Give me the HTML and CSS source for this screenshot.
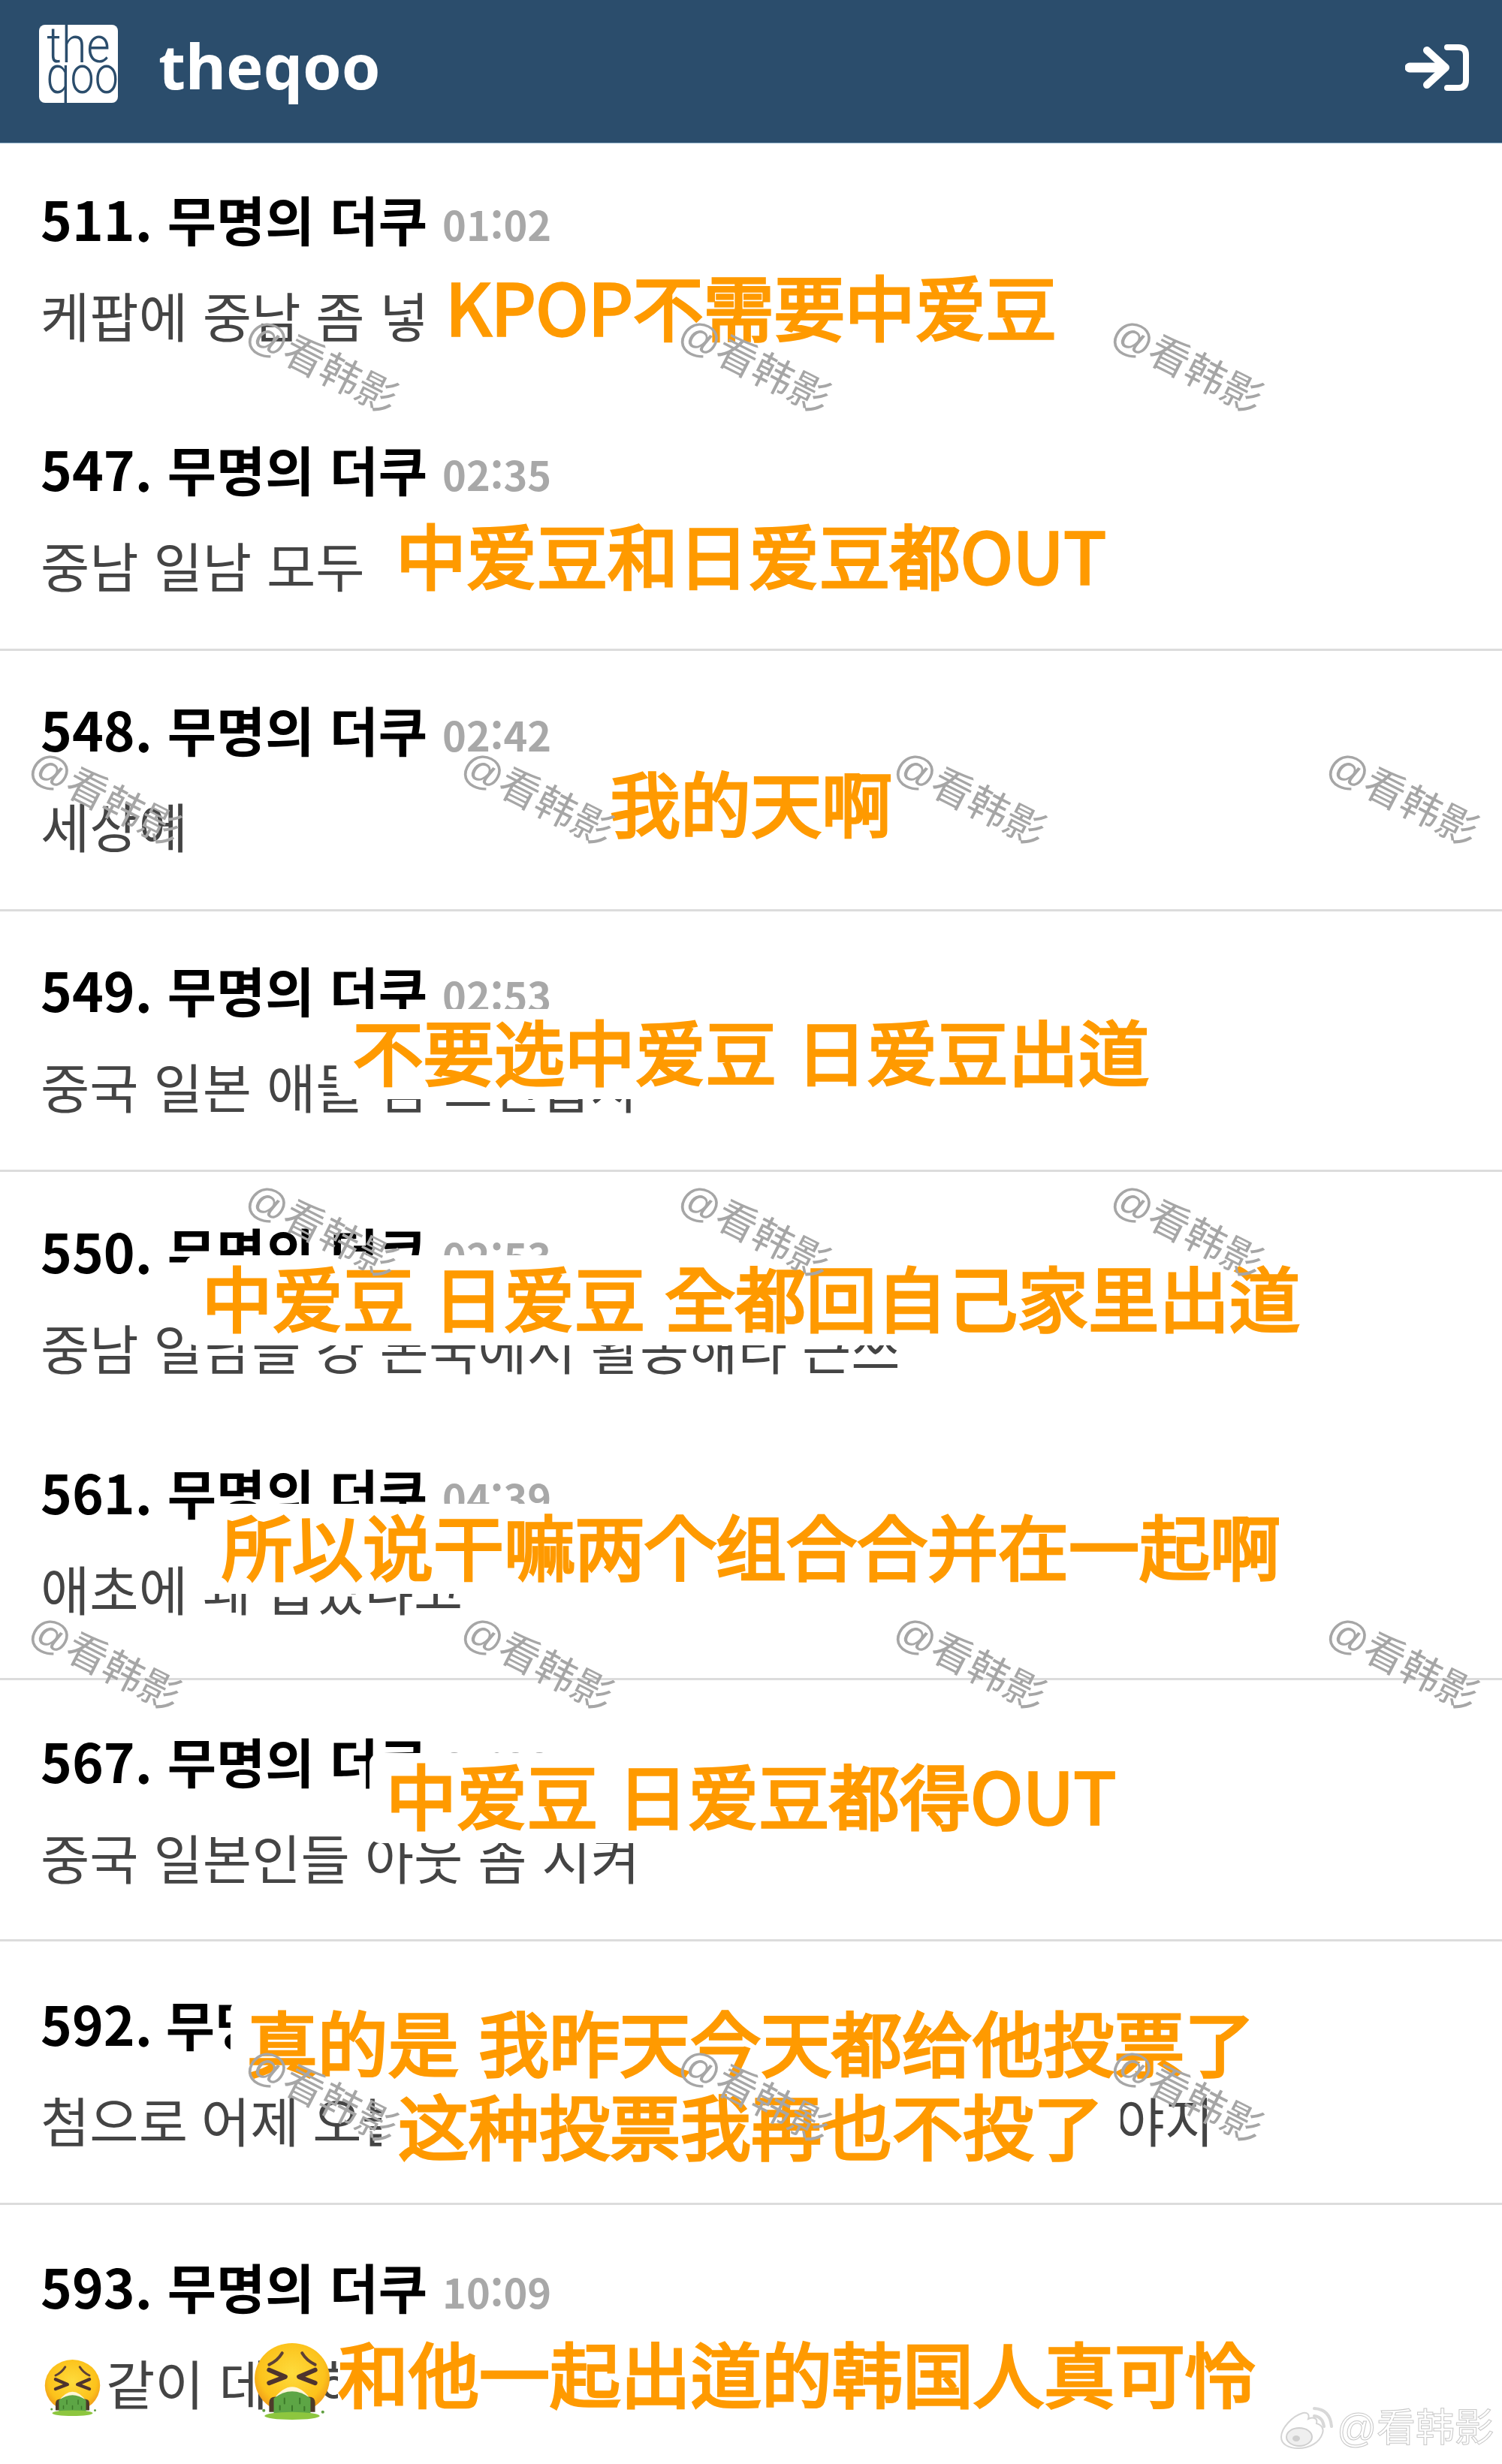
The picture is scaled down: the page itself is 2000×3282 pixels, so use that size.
FILE: index.html
```html
<!DOCTYPE html>
<html lang="ko">
<head>
  <meta charset="UTF-8" />
  <meta name="viewport" content="width=device-width, initial-scale=1" />
  <title>theqoo</title>
  <link rel="stylesheet" href="styles.css">
</head>
<body>

<svg class="defs" width="0" height="0">
  <defs>
    <radialGradient id="faceFill" cx="50%" cy="42%" r="58%">
      <stop offset="0" stop-color="#fedb3c" />
      <stop offset="0.75" stop-color="#fcc21b" />
      <stop offset="1" stop-color="#f19a1a" />
    </radialGradient>
    <symbol id="vomit" viewBox="0 0 100 100">
      <ellipse cx="50" cy="46" rx="49" ry="46" fill="url(#faceFill)" />
      <path d="M20 28 Q31 23 37 13 M80 28 Q69 23 63 13" fill="none" stroke="#5d4037" stroke-width="4" stroke-linecap="round" />
      <path d="M20 35 L41 44 L20 52 M80 35 L59 44 L80 52" fill="none" stroke="#4e342e" stroke-width="6" stroke-linecap="round" stroke-linejoin="round" />
      <path d="M25 74 Q50 40 75 74 Z" fill="#fff6d8" />
      <path d="M20 90 V78 Q20 70 28 70 H72 Q80 70 80 78 V90 Z" fill="#4e3b2a" />
      <path d="M26 92 V72 Q38 63 50 63 Q62 63 74 72 V92 Z" fill="#5da545" />
      <path d="M40 72 v7 M50 82 v6 M60 72 v7 M34 82 v5 M66 83 v5" stroke="#3c7a2a" stroke-width="2" stroke-linecap="round" />
      <ellipse cx="50" cy="95" rx="36" ry="5" fill="#8dc63f" />
      <circle cx="13" cy="88" r="2" fill="#5f9e3f" />
      <circle cx="90" cy="90" r="2" fill="#5f9e3f" />
    </symbol>
  </defs>
</svg>

<header class="topbar">
  <div class="logo">
    <span class="logo-the">the</span>
    <span class="logo-qoo">qoo</span>
  </div>
  <div class="site-name">theqoo</div>
  <svg class="login-icon" viewBox="0 0 85 64" width="85" height="64">
    <path d="M6 32 H50" fill="none" stroke="#fff" stroke-width="13" stroke-linecap="round" />
    <path d="M29 9 L54 32 L29 55" fill="none" stroke="#fff" stroke-width="10" stroke-linecap="round" stroke-linejoin="round" />
    <path d="M56 5 H71 Q81 5 81 15 V49 Q81 59 71 59 H56" fill="none" stroke="#fff" stroke-width="8" stroke-linecap="round" />
  </svg>
</header>

<main class="comments">
  <article class="comment c511">
    <div class="who">511. 무명의 더쿠 <span class="time">01:02</span></div>
    <p class="msg">케팝에 중남 좀 넣</p>
  </article>
  <article class="comment c547">
    <div class="who">547. 무명의 더쿠 <span class="time">02:35</span></div>
    <p class="msg">중남 일남 모두</p>
  </article>
  <article class="comment c548">
    <div class="who">548. 무명의 더쿠 <span class="time">02:42</span></div>
    <p class="msg">세상에</p>
  </article>
  <article class="comment c549">
    <div class="who">549. 무명의 더쿠 <span class="time">02:53</span></div>
    <p class="msg">중국 일본 애들 좀 그만뽑자</p>
  </article>
  <article class="comment c550">
    <div class="who">550. 무명의 더쿠 <span class="time">02:53</span></div>
    <p class="msg">중남 일남들 걍 본국에서 활동해라 큰쓰</p>
  </article>
  <article class="comment c561">
    <div class="who">561. 무명의 더쿠 <span class="time">04:39</span></div>
    <p class="msg">애초에 왜 뽑았냐고</p>
  </article>
  <article class="comment c567">
    <div class="who">567. 무명의 더쿠 <span class="time">05:00</span></div>
    <p class="msg">중국 일본인들 아웃 좀 시켜</p>
  </article>
  <article class="comment c592">
    <div class="who">592. 무명의 더쿠 <span class="time">09:12</span></div>
    <p class="msg">첨으로 어제 오늘 다 투표했는데 이런 투표 그만해야지</p>
  </article>
  <article class="comment c593">
    <div class="who">593. 무명의 더쿠 <span class="time">10:09</span></div>
    <p class="msg"><svg class="emoji"><use href="#vomit" /></svg>같이 데뷔하는</p>
  </article>
</main>

<!-- subtitles pasted over the screenshot, they hide whatever is under them -->
<div class="cap cap1">KPOP不需要中爱豆</div>
<div class="cap cap2">中爱豆和日爱豆都OUT</div>
<div class="cap cap3">我的天啊</div>
<div class="cap cap4">不要选中爱豆 日爱豆出道</div>
<div class="cap cap5">中爱豆 日爱豆 全都回自己家里出道</div>
<div class="cap cap6">所以说干嘛两个组合合并在一起啊</div>
<div class="cap cap7">中爱豆 日爱豆都得OUT</div>
<div class="cap cap8">真的是 我昨天今天都给他投票了</div>
<div class="cap cap9">这种投票我再也不投了</div>
<div class="cap cap10">和他一起出道的韩国人真可怜</div>
<svg class="emoji-big"><use href="#vomit" /></svg>

<div class="marks">
  <div class="mark-row">
    <span class="mark">@看韩影</span><span class="mark">@看韩影</span><span class="mark">@看韩影</span>
  </div>
  <div class="mark-row mark-row-alt">
    <span class="mark">@看韩影</span><span class="mark">@看韩影</span><span class="mark">@看韩影</span><span class="mark">@看韩影</span>
  </div>
  <div class="mark-row">
    <span class="mark">@看韩影</span><span class="mark">@看韩影</span><span class="mark">@看韩影</span>
  </div>
  <div class="mark-row mark-row-alt">
    <span class="mark">@看韩影</span><span class="mark">@看韩影</span><span class="mark">@看韩影</span><span class="mark">@看韩影</span>
  </div>
  <div class="mark-row">
    <span class="mark">@看韩影</span><span class="mark">@看韩影</span><span class="mark">@看韩影</span>
  </div>
</div>

<div class="weibo">
  <svg class="weibo-logo" viewBox="0 0 72 60" width="72" height="60">
    <path d="M3 42 C3 30 18 14 32 10 C38 9 41 12 39 18 C46 15 52 17 50 24 C57 26 60 31 58 37 C54 50 40 57 26 57 C13 57 3 52 3 42 Z" fill="#fff" stroke="#d4d4d4" stroke-width="2" />
    <ellipse cx="27" cy="42" rx="17" ry="12" fill="#efefef" stroke="#cfcfcf" stroke-width="2" />
    <ellipse cx="23" cy="44" rx="5" ry="4" fill="#cfcfcf" />
    <path d="M47 14 Q58 15 60 28 M47 4 Q68 5 70 28" fill="none" stroke="#d8d8d8" stroke-width="4" stroke-linecap="round" />
  </svg>
  <span class="weibo-name">@看韩影</span>
</div>

</body>
</html>
```

FILE: styles.css
```css
html, body {
  margin: 0;
  background: #fff;
}
body {
  position: relative;
  width: 2000px;
  height: 3282px;
  overflow: hidden;
  font-family: "Noto Sans CJK KR", "Noto Sans", sans-serif;
}
.defs {
  position: absolute;
}

/* top bar */
.topbar {
  display: flex;
  align-items: center;
  height: 190px;
  padding: 0 44px 0 52px;
  background: #2b4d6c;
  border-bottom: 1px solid #8fb0c8;
}
.logo {
  flex: none;
  width: 105px;
  height: 104px;
  margin-top: -20px;
  background: #fff;
  border-radius: 8px;
  color: #2b4d6c;
  font-family: Roboto, "Noto Sans", sans-serif;
  font-weight: 300;
  text-align: center;
}
.logo-the, .logo-qoo {
  display: block;
  height: 50px;
  line-height: 50px;
}
.logo-the {
  margin-top: 3px;
  font-size: 66px;
  transform: scaleX(0.92);
}
.logo-qoo {
  margin-top: -11px;
  font-size: 70px;
  transform: scaleX(0.82);
}
.site-name {
  margin: -16px 0 0 54px;
  color: #fff;
  font-family: "Noto Sans", sans-serif;
  font-size: 83px;
  font-weight: 700;
  line-height: 100px;
}
.login-icon {
  margin: -10px 0 0 auto;
}

/* comment list */
.comment {
  padding: 64px 54px 65px;
  border-bottom: 3px solid #dcdcdc;
}
.who {
  height: 90px;
  color: #000;
  font-size: 71px;
  font-weight: 700;
  line-height: 80px;
  white-space: nowrap;
}
.time {
  color: #a8a8a8;
  font-size: 54px;
  font-weight: 700;
  line-height: 1;
}
.msg {
  display: flex;
  align-items: flex-start;
  height: 90px;
  margin: 35px 0 0;
  color: #444;
  font-size: 71px;
  line-height: 86px;
  white-space: pre;
}
.emoji {
  flex: none;
  width: 75px;
  height: 77px;
  margin: 13px 7px 0 5px;
}
.c511 { padding-top: 59px; padding-bottom: 0; border-bottom: 0; }
.c547 { padding-top: 118px; padding-bottom: 66px; }
.c548 { padding-top: 63px; padding-bottom: 66px; }
.c549 { padding-top: 63px; padding-bottom: 66px; }
.c550 { padding-bottom: 0; border-bottom: 0; }
.c561 { padding-top: 106px; padding-bottom: 74px; }
.c567 { padding-top: 66px; padding-bottom: 64px; }
.c592 { padding-top: 68px; padding-bottom: 65px; word-spacing: -2px; }
.c593 { padding-top: 67px; padding-bottom: 0; border-bottom: 0; }

/* orange subtitles */
.cap {
  position: absolute;
  left: 50%;
  padding: 0 22px 12px;
  background: #fff;
  border-radius: 14px;
  color: #ff9a00;
  font-family: "Noto Sans CJK SC", sans-serif;
  font-size: 94px;
  font-weight: 400;
  line-height: 108px;
  white-space: pre;
  transform: translateX(-50%);
  -webkit-text-stroke: 3.5px #ff9a00;
}
.cap1 { top: 352px; }
.cap2 { top: 683px; }
.cap3 { top: 1013px; }
.cap4 { top: 1344px; }
.cap5 { top: 1672px; }
.cap6 { top: 2003px; }
.cap7 { top: 2335px; }
.cap8 { top: 2664px; }
.cap9 { top: 2775px; }
.cap10 {
  top: 3105px;
  left: 450px;
  padding: 0 0 12px;
  transform: none;
}
.emoji-big {
  position: absolute;
  top: 3120px;
  left: 338px;
  width: 102px;
  height: 104px;
}

/* diagonal watermark grid */
.marks {
  position: absolute;
  top: 199px;
  left: 299px;
}
.mark-row {
  display: flex;
  align-items: center;
  gap: 316px;
  height: 576px;
}
.mark-row-alt {
  margin-left: -289px;
}
.mark {
  flex: none;
  width: 260px;
  color: #a6a6a6;
  font-family: "Liberation Sans", "Noto Sans CJK SC", sans-serif;
  font-size: 54px;
  line-height: 70px;
  text-align: center;
  transform: rotate(27deg);
}

/* weibo tag bottom right */
.weibo {
  position: absolute;
  right: 11px;
  bottom: 18px;
  display: flex;
  align-items: center;
  gap: 5px;
}
.weibo-name {
  color: #fff;
  font-family: "Liberation Sans", "Noto Sans CJK SC", sans-serif;
  font-size: 52px;
  line-height: 60px;
  -webkit-text-stroke: 1px #c8c8c8;
}
```
